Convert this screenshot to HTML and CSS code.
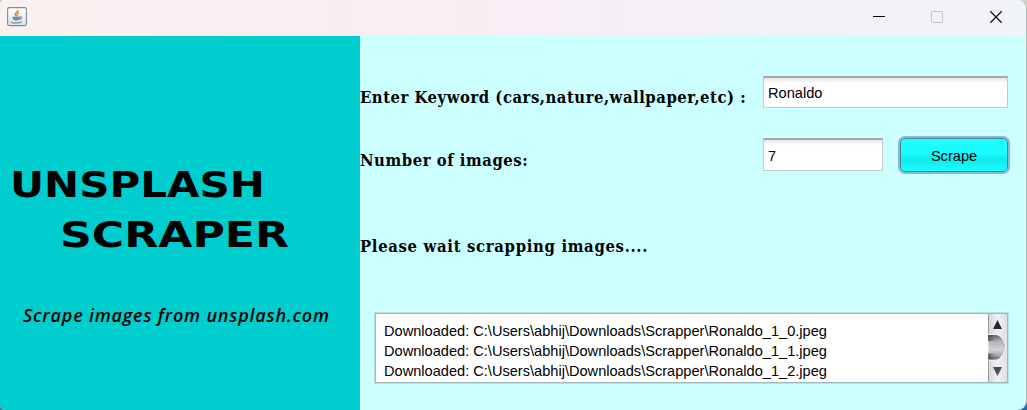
FILE: index.html
```html
<!DOCTYPE html>
<html lang="en">
<head>
<meta charset="utf-8">
<title>Unsplash Scraper</title>
<link rel="stylesheet" href="styles.css">
</head>
<body>
<div class="window">
  <header class="titlebar">
    <svg class="app-icon" width="20" height="20" viewBox="0 0 20 20">
      <defs><linearGradient id="tile" x2="0" y2="1"><stop offset="0" stop-color="#fff"/><stop offset="1" stop-color="#dfe2e5"/></linearGradient></defs>
      <rect x=".6" y=".6" width="18.8" height="18" rx="1.8" fill="url(#tile)" stroke="#788d9d" stroke-width="1.1"/>
      <path d="M10.7 3.2C11.6 5 7.2 6 8.2 8L9.6 9.5M12 5.5C9.2 6.6 10.8 7.8 10.1 9" fill="none" stroke="#ef8a42" stroke-width="1.6"/>
      <path d="M5.3 9.8h7.5v1.2c0 2-1.1 2.5-3.6 2.5S5.8 12.8 5.3 9.8Z" fill="#6e8fa6"/>
      <path d="M12.5 9.9c3-.7 2.7 2.2-.3 2.4M4 14.9c2 1.5 8.5 1.4 11-.2" fill="none" stroke="#6e8fa6" stroke-width="1.2"/>
    </svg>
    <svg class="controls" width="130" height="14" viewBox="0 0 130 14">
      <path d="M0 6.5h12" stroke="#000"/>
      <rect x="58.5" y="1.5" width="11" height="11" rx="1" fill="none" stroke="#c8c5cc"/>
      <path d="M117.3 1.3l11.4 11.4M128.7 1.3L117.3 12.7" stroke="#111" stroke-width="1.25"/>
    </svg>
  </header>
  <div class="content">
    <aside class="brand">
      <svg class="logo" width="360" height="170" viewBox="0 0 360 170">
        <text class="logo-name" x="10" y="36" textLength="255" lengthAdjust="spacingAndGlyphs">UNSPLASH</text>
        <text class="logo-name" x="60" y="86" textLength="229" lengthAdjust="spacingAndGlyphs">SCRAPER</text>
        <text class="tagline" x="23" y="160.500" textLength="306" lengthAdjust="spacing">Scrape images from unsplash.com</text>
      </svg>
    </aside>
    <main class="form">
      <div class="row">
        <label class="label keyword">Enter Keyword (cars,nature,wallpaper,etc) :</label>
        <div class="field wide">Ronaldo</div>
      </div>
      <div class="row second">
        <label class="label number">Number of images:</label>
        <div class="field narrow">7</div>
        <div class="button">Scrape</div>
      </div>
      <div class="label status">Please wait scrapping images....</div>
      <div class="log">
        <div class="lines">
          <div>Downloaded: C:\Users\abhij\Downloads\Scrapper\Ronaldo_1_0.jpeg</div>
          <div>Downloaded: C:\Users\abhij\Downloads\Scrapper\Ronaldo_1_1.jpeg</div>
          <div>Downloaded: C:\Users\abhij\Downloads\Scrapper\Ronaldo_1_2.jpeg</div>
        </div>
        <svg class="scroll" width="19" height="68" viewBox="0 0 19 68">
          <defs>
            <linearGradient id="track"><stop offset="0" stop-color="#d2d5d9"/><stop offset=".5" stop-color="#eeeff1"/><stop offset="1" stop-color="#dfe1e4"/></linearGradient>
            <linearGradient id="shade"><stop offset="0" stop-color="#303034" stop-opacity=".7"/><stop offset="1" stop-color="#88888d" stop-opacity="0"/></linearGradient>
            <linearGradient id="thumb" x2="0" y2="1"><stop offset="0" stop-color="#55555a"/><stop offset=".25" stop-color="#aeb0b4"/><stop offset=".6" stop-color="#d1d3d7"/><stop offset=".82" stop-color="#aaacaf"/><stop offset="1" stop-color="#59595d"/></linearGradient>
            <linearGradient id="arrow" x2="0" y2="1"><stop offset="0" stop-color="#202124"/><stop offset="1" stop-color="#505257"/></linearGradient>
          </defs>
          <path d="M0 0h19v68H0Z" fill="url(#track)"/>
          <path d="M.5 0v68" stroke="#969b9f"/>
          <path d="M0 20.500h8c5 1 8.500 6 10 12.500c-1.500 6-5 12-10 13H0Z" fill="url(#thumb)" stroke="#f4f5f6"/>
          <path d="M0 21h10v6H0ZM0 39.500h10v6H0Z" fill="url(#shade)"/>
          <path d="M9.500 6L14 15H5ZM5 53h9L9.500 62Z" fill="url(#arrow)"/>
        </svg>
      </div>
    </main>
  </div>
</div>
</body>
</html>
```
FILE: styles.css
```css
body {
  margin: 0;
  overflow: hidden;
  background: linear-gradient(#d5d3d0 0 50%, transparent 50%), linear-gradient(90deg, #46658b 0 50%, #2b65a0 50%);
}
.window {
  box-sizing: border-box;
  width: 1027px;
  height: 410px;
  overflow: hidden;
  border-right: 1px solid #afb4b5;
  border-radius: 5px 9px 9px 5px;
  background: #cff;
  font-family: "Liberation Sans", Arial, sans-serif;
}
.titlebar {
  display: flex;
  justify-content: space-between;
  box-sizing: border-box;
  height: 36px;
  padding: 7px 23px 0 7px;
  background: linear-gradient(90deg, #f9f0ef, #f8eef3 40%, #f3f0f7 75%, #f0f3f8);
}
.controls {
  margin-top: 3px;
}
.content {
  display: flex;
  height: 374px;
}
.brand {
  width: 360px;
  flex: none;
  box-sizing: border-box;
  padding-top: 125px;
  background: #00cdcd;
}
.logo {
  display: block;
}
.logo-name {
  font: bold 35.7px "DejaVu Sans", sans-serif;
}
.tagline {
  font: italic 600 18px "Open Sans", sans-serif;
}
.form {
  width: 666px;
}
.row {
  display: flex;
  align-items: flex-start;
  padding-top: 40px;
}
.second {
  padding-top: 29px;
}
.label {
  font: bold 16.5px/24px "DejaVu Serif Condensed", "DejaVu Serif", serif;
  white-space: nowrap;
}
.row .label {
  width: 403px;
  flex: none;
  padding-top: 10px;
}
.keyword {
  letter-spacing: 0.52px;
}
.number {
  letter-spacing: 0.55px;
}
.row + .status {
  padding-top: 61px;
  letter-spacing: 0.68px;
}
.row.second {
  height: 35px;
}
.field {
  box-sizing: border-box;
  height: 32px;
  padding-left: 4px;
  border: 1px solid #c6c9cb;
  border-top: 2px solid #a6a9ab;
  background: linear-gradient(#e5e5e5, #fff 5px);
  font-size: 14.6px;
  line-height: 31px;
}
.second .field {
  height: 33px;
  margin-top: -1px;
  line-height: 33px;
}
.wide {
  width: 245px;
  margin-bottom: 1px;
}
.narrow {
  width: 120px;
}
.button {
  box-sizing: border-box;
  width: 108px;
  height: 34px;
  margin-left: 17px;
  border: 1.5px solid #527f95;
  border-radius: 5px;
  background: linear-gradient(#1cffff, #19fbfd 45%, #10e9eb 65%, #1cffff);
  box-shadow: 0 0 0 2px #82b9d6;
  margin-top: -1px;
  text-align: center;
  font-size: 14.6px;
  line-height: 34px;
}
.log {
  display: flex;
  justify-content: space-between;
  box-sizing: border-box;
  width: 633px;
  height: 70px;
  margin: 54px 0 0 15px;
  border: 1px solid #a0b9c1;
  box-shadow: 0 0 0 1px #b9dfe4;
  background: #fff;
}
.lines {
  padding: 7px 0 0 8px;
  font-size: 14.6px;
  line-height: 20px;
}
```
